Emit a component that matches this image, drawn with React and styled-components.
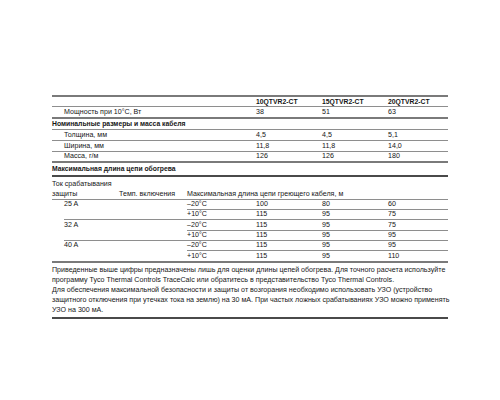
import React from "react"
import styled, { createGlobalStyle } from "styled-components"

const GlobalStyle = createGlobalStyle`
  html, body {
    margin: 0;
    padding: 0;
    background: #fff;
  }
  body {
    font-family: "Liberation Sans", Arial, sans-serif;
    color: #161616;
  }
`

const Page = styled.div`
  padding: 95px 52px 0 52px;
  width: 396px;
  font-size: 7.1px;
`

const Rule = styled.div`
  height: ${p => p.$w || 1}px;
  background: ${p => p.$c || "#8e8e8e"};
  margin-left: ${p => p.$indent || 0}px;
`

const Row = styled.div`
  display: grid;
  grid-template-columns: 67px 68px 69px 66px 66px 60px;
  height: ${p => p.$h || 10}px;
  line-height: ${p => p.$h || 10}px;
  white-space: nowrap;
`

const Cell = styled.div`
  grid-column: ${p => (p.$col ? `${p.$col} / span ${p.$span || 1}` : "auto")};
  padding-left: ${p => p.$indent || 0}px;
  font-weight: ${p => (p.$bold ? 700 : 400)};
  font-size: ${p => (p.$bold ? "6.8px" : "inherit")};
`

const HeadRow = styled.div`
  display: grid;
  grid-template-columns: 67px 68px 69px 66px 66px 60px;
  padding: 2px 0 0;
  height: 20px;
  line-height: 10px;
  white-space: nowrap;
  align-items: end;
`

const Notes = styled.div`
  padding: 2px 0 2px;
  line-height: 10px;
  white-space: nowrap;
`

const models = ["10QTVR2-CT", "15QTVR2-CT", "20QTVR2-CT"]

const sizes = [
  { label: "Толщина, мм", h: 10, v: ["4,5", "4,5", "5,1"] },
  { label: "Ширина, мм", h: 10, v: ["11,8", "11,8", "14,0"] },
  { label: "Масса, г/м", h: 9, v: ["126", "126", "180"] },
]

const lengths = [
  {
    amp: "25 A",
    rows: [
      ["–20°C", "100", "80", "60"],
      ["+10°C", "115", "95", "75"],
    ],
  },
  {
    amp: "32 A",
    rows: [
      ["–20°C", "115", "95", "75"],
      ["+10°C", "115", "95", "95"],
    ],
  },
  {
    amp: "40 A",
    rows: [
      ["–20°C", "115", "95", "95"],
      ["+10°C", "115", "95", "110"],
    ],
  },
]

const Values = ({ v }) =>
  v.map((x, i) => (
    <Cell key={i} $col={4 + i}>
      {x}
    </Cell>
  ))

export default function App() {
  return (
    <>
      <GlobalStyle />
      <Page>
        <Rule $w={2} $c="#7a7a7a" />
        <Row $h={9}>
          {models.map((m, i) => (
            <Cell key={m} $col={4 + i} $bold>
              {m}
            </Cell>
          ))}
        </Row>
        <Rule />
        <Row $h={10}>
          <Cell $col={1} $span={3} $indent={12}>
            Мощность при 10°С, Вт
          </Cell>
          <Values v={["38", "51", "63"]} />
        </Row>
        <Rule $w={2} $c="#7a7a7a" />
        <Row $h={10}>
          <Cell $col={1} $span={3} $bold>
            Номинальные размеры и масса кабеля
          </Cell>
        </Row>
        <Rule />
        {sizes.map((s, i) => (
          <React.Fragment key={s.label}>
            <Row $h={s.h}>
              <Cell $col={1} $span={3} $indent={12}>
                {s.label}
              </Cell>
              <Values v={s.v} />
            </Row>
            {i < sizes.length - 1 ? <Rule /> : <Rule $w={2} $c="#7a7a7a" />}
          </React.Fragment>
        ))}
        <Row $h={12}>
          <Cell $col={1} $span={3} $bold>
            Максимальная длина цепи обогрева
          </Cell>
        </Row>
        <Rule $w={2} $c="#4a4a4a" />
        <HeadRow>
          <Cell $col={1}>
            Ток срабатывания
            <br />
            защиты
          </Cell>
          <Cell $col={2}>Темп. включения</Cell>
          <Cell $col={3} $span={4}>
            Максимальная длина цепи греющего кабеля, м
          </Cell>
        </HeadRow>
        <Rule />
        {lengths.map((g, gi) => (
          <React.Fragment key={g.amp}>
            {g.rows.map((r, ri) => (
              <React.Fragment key={ri}>
                <Row $h={ri === 1 && gi === 2 ? 10 : gi === 1 && ri === 0 ? 10 : 9}>
                  <Cell $col={1} $indent={12}>
                    {ri === 0 ? g.amp : ""}
                  </Cell>
                  <Cell $col={3}>{r[0]}</Cell>
                  <Values v={r.slice(1)} />
                </Row>
                {ri === 0 ? (
                  <Rule $indent={135} />
                ) : gi < lengths.length - 1 ? (
                  <Rule $indent={12} />
                ) : (
                  <Rule $w={2} $c="#7a7a7a" />
                )}
              </React.Fragment>
            ))}
          </React.Fragment>
        ))}
        <Notes>
          Приведенные выше цифры предназначены лишь для оценки длины цепей обогрева. Для точного расчета используйте
          <br />
          программу Tyco Thermal Controls TraceCalc или обратитесь в представительство Tyco Thermal Controls.
          <br />
          Для обеспечения максимальной безопасности и защиты от возгорания необходимо использовать УЗО (устройство
          <br />
          защитного отключения при утечках тока на землю) на 30 мА. При частых ложных срабатываниях УЗО можно применять
          <br />
          УЗО на 300 мА.
        </Notes>
        <Rule $w={2} $c="#4a4a4a" />
      </Page>
    </>
  )
}
